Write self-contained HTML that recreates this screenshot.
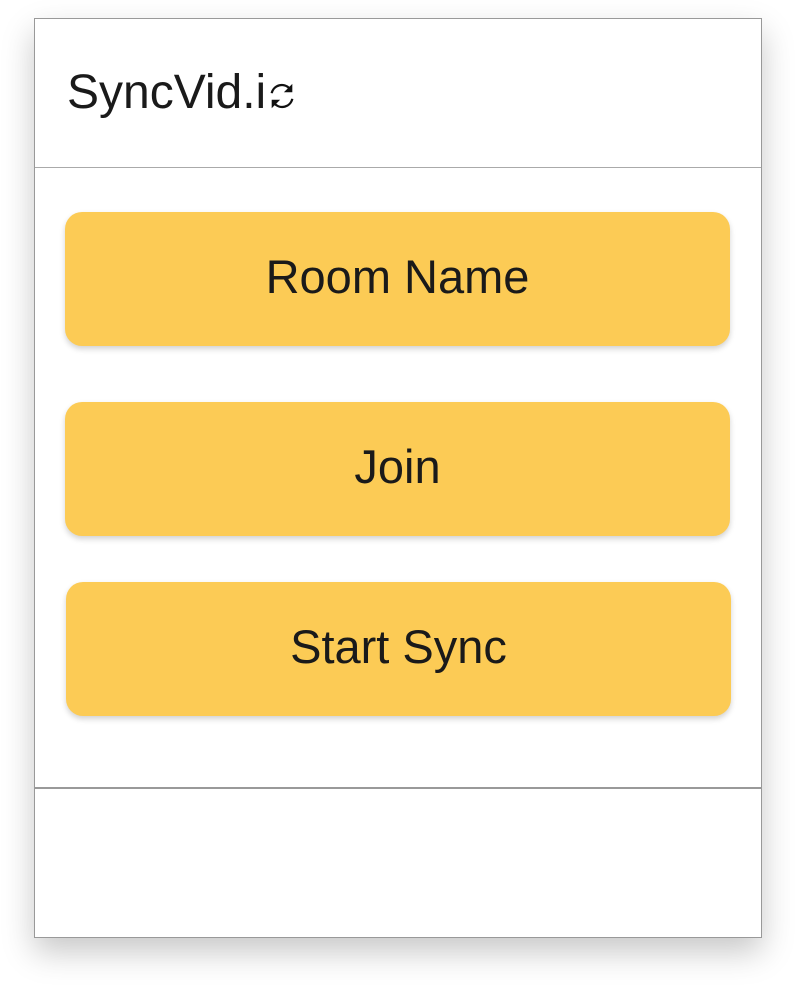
<!DOCTYPE html>
<html><head><style>
body{margin:0;width:796px;height:988px;background:#fff;position:relative;overflow:hidden;font-family:"Liberation Sans",sans-serif;}
.frame{position:absolute;left:34px;top:18px;width:726px;height:918px;border:1px solid #999;background:#fff;box-shadow:0 14px 30px rgba(0,0,0,0.22);}
.hdr{position:absolute;left:0;top:0;width:726px;height:148px;border-bottom:1px solid #aaa;}
.logo{position:absolute;left:32px;top:46px;font-size:48px;color:#1a1a1a;letter-spacing:0px;}
.foot{position:absolute;left:0;top:768px;width:726px;height:150px;border-top:2px solid #999;}
.btn{position:absolute;width:665px;height:134px;border-radius:17px;background:#fccb55;box-shadow:0 3px 6px rgba(0,0,0,0.18);font-size:47px;color:#1a1a1a;text-align:center;line-height:130px;}
</style></head><body>
<div class="frame">
<div class="hdr"><div class="logo">SyncVid.i<svg width="30" height="30" viewBox="0 0 32 32" style="vertical-align:-3px;margin-left:1px"><path d="M5 13 A11 11 0 0 1 24 8" fill="none" stroke="#111" stroke-width="2.4"/><path d="M27 3 L27 12 L18 12 Z" fill="#111"/><path d="M27 19 A11 11 0 0 1 8 24" fill="none" stroke="#111" stroke-width="2.4"/><path d="M5 29 L5 20 L14 20 Z" fill="#111"/></svg></div></div>
<div class="btn" style="left:30px;top:193px">Room Name</div>
<div class="btn" style="left:30px;top:383px">Join</div>
<div class="btn" style="left:31px;top:563px">Start Sync</div>
<div class="foot"></div>
</div>
</body></html>
